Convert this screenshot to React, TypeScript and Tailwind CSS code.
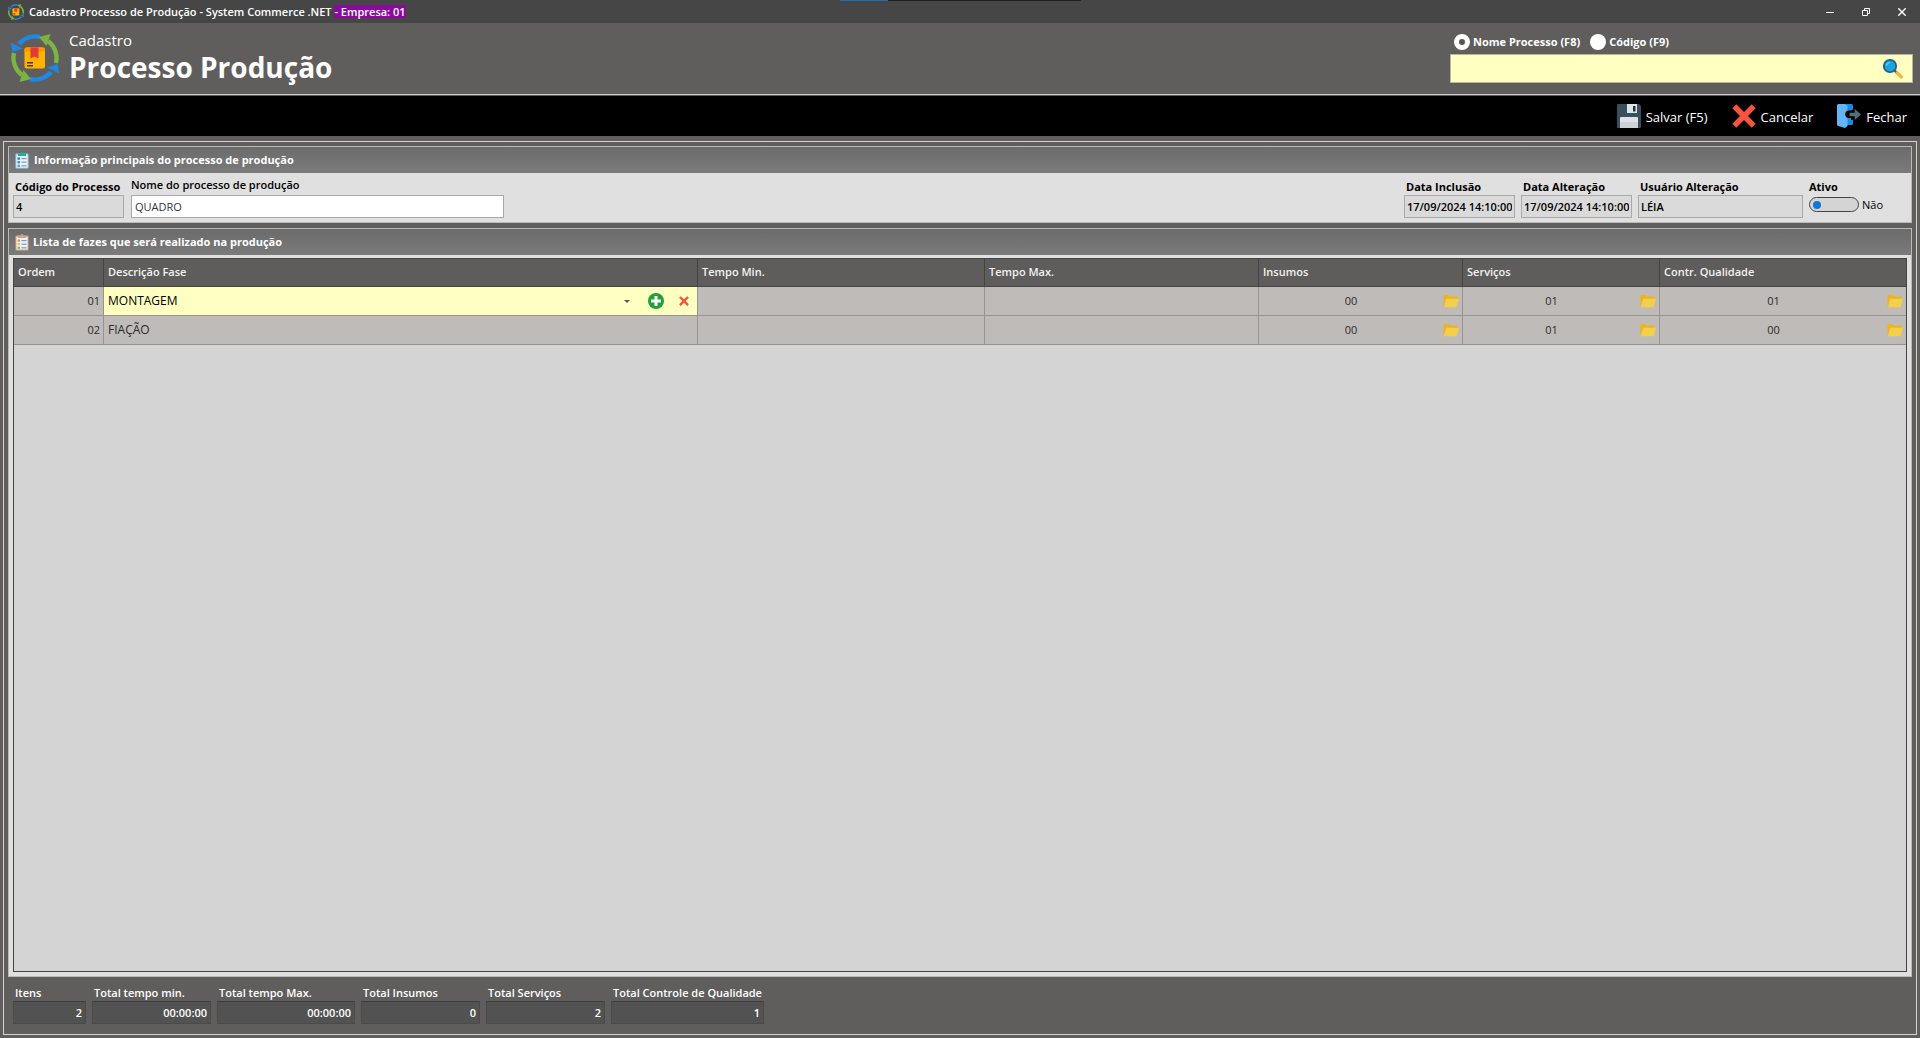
import React, { useState } from "react";

type Fase = {
  ordem: string;
  descricao: string;
  tempoMin: string;
  tempoMax: string;
  insumos: string;
  servicos: string;
  qualidade: string;
};

const FASES: Fase[] = [
  { ordem: "01", descricao: "MONTAGEM", tempoMin: "", tempoMax: "", insumos: "00", servicos: "01", qualidade: "01" },
  { ordem: "02", descricao: "FIAÇÃO", tempoMin: "", tempoMax: "", insumos: "00", servicos: "01", qualidade: "00" },
];

const COLUNAS = [
  { titulo: "Ordem", largura: "w-[90px]" },
  { titulo: "Descrição Fase", largura: "" },
  { titulo: "Tempo Min.", largura: "w-[287px]" },
  { titulo: "Tempo Max.", largura: "w-[274px]" },
  { titulo: "Insumos", largura: "w-[204px]" },
  { titulo: "Serviços", largura: "w-[197px]" },
  { titulo: "Contr. Qualidade", largura: "w-[246px]" },
];

const TOTAIS = [
  { id: "itens", label: "Itens", valor: "2", largura: "w-[73px]" },
  { id: "tempo-min", label: "Total tempo min.", valor: "00:00:00", largura: "w-[119px]" },
  { id: "tempo-max", label: "Total tempo Max.", valor: "00:00:00", largura: "w-[138px]" },
  { id: "insumos", label: "Total Insumos", valor: "0", largura: "w-[119px]" },
  { id: "servicos", label: "Total Serviços", valor: "2", largura: "w-[119px]" },
  { id: "qualidade", label: "Total Controle de Qualidade", valor: "1", largura: "w-[153px]" },
];

// ======== Ícones ========
function LogoProcesso({ className }: { className: string }) {
  return (
    <svg viewBox="0 0 48 48" className={className} aria-hidden="true">
      <g fill="none" strokeWidth="4.4">
        <path d="M8 10A21.500 21.500 0 0 1 29 3" stroke="#1e88e5" />
        <path d="M37 7A21.500 21.500 0 0 1 45 29" stroke="#7cb342" />
        <path d="M40 38A21.500 21.500 0 0 1 19 45" stroke="#1e88e5" />
        <path d="M11 41A21.500 21.500 0 0 1 3 19" stroke="#7cb342" />
      </g>
      <path d="M0 8.500L1.500 18L11.500 14.500z" fill="#1e88e5" />
      <path d="M39.500 0L28 3L35.500 12z" fill="#7cb342" />
      <path d="M48 39.500L46.500 30L36.500 33.500z" fill="#1e88e5" />
      <path d="M8.500 48L20 45L12.500 36z" fill="#7cb342" />
      <rect x="13.500" y="13.500" width="20.500" height="21" rx="2" fill="#ffb300" />
      <path d="M15.500 13.500h16.500a2 2 0 0 1 2 2v2h-20.500v-2a2 2 0 0 1 2-2z" fill="#ff9800" />
      <path d="M19.500 13.500h8v11l-4-2l-4 2z" fill="#e53935" />
      <path d="M16 28h6v1.500h-6zM16 31h6v1.500h-6z" fill="#4e342e" />
    </svg>
  );
}

function IconeLupa() {
  return (
    <svg viewBox="0 0 22 22" className="size-[22px]" aria-hidden="true">
      <path d="M13.500 13.500L19.500 19" stroke="#f0b445" strokeWidth="3.200" strokeLinecap="round" />
      <path d="M12 12l2 2" stroke="#37607a" strokeWidth="2" />
      <circle cx="8" cy="8" r="6.200" fill="#1fa2e0" stroke="#1b668c" strokeWidth="1.800" />
      <path d="M4.500 7.500a3.600 3.600 0 0 1 3-3" stroke="#6fcbf5" strokeWidth="1.300" fill="none" />
    </svg>
  );
}

function IconeSalvar() {
  return (
    <svg viewBox="0 0 24 24" className="size-6" aria-hidden="true">
      <path d="M1 0h21l2 2v21a1 1 0 0 1-1 1H1a1 1 0 0 1-1-1V1a1 1 0 0 1 1-1z" fill="#37505e" />
      <path d="M10 0h10v9H10z" fill="#dfe3e6" />
      <path d="M16 2h2.500v5.500H16z" fill="#263238" />
      <path d="M4 13h16a1 1 0 0 1 1 1v10H3V14a1 1 0 0 1 1-1z" fill="#dfe1e6" />
      <path d="M3 18h18v6H3z" fill="#cdd1d6" />
    </svg>
  );
}

function IconeX({ className }: { className: string }) {
  return (
    <svg viewBox="0 0 24 24" className={className} aria-hidden="true">
      <path d="M4.200 0.300L12 8L19.800 0.300L23.700 4.200L16 12L23.700 19.800L19.800 23.700L12 16L4.200 23.700L0.300 19.800L8 12L0.300 4.200z" fill="#f65340" />
    </svg>
  );
}

function IconeFechar() {
  return (
    <svg viewBox="0 0 24 24" className="size-6" aria-hidden="true">
      <path d="M8 0h6.500A1.500 1.500 0 0 1 16 1.500v18a1.500 1.500 0 0 1-1.500 1.500H8z" fill="#1e88e5" />
      <path d="M0 1.500A1.500 1.500 0 0 1 1.500 0H8l2.500 2v20L8 24L1.300 22A1.500 1.500 0 0 1 0 20.500z" fill="#64b5f6" />
      <path d="M16 5.500v10.500h-2v-2h-2a2 2 0 0 1 0-7.500h2z" fill="#000" />
      <path d="M12.500 8.800h5.200V5l6.300 5.500l-6.300 5.500v-3.800h-5.200z" fill="#546e7a" />
    </svg>
  );
}

function IconeLista({ prancha, clip, marcas }: { prancha: string; clip: string; marcas: string[] }) {
  return (
    <svg viewBox="0 0 14 17" className="h-[17px] w-3.5 shrink-0" aria-hidden="true">
      <rect x="0.500" y="1.500" width="13" height="15" rx="1" fill={prancha} />
      <rect x="1.500" y="3" width="11" height="12.500" fill="#eaf2fb" />
      <path d="M3 1.500h2.500a1.500 1.500 0 0 1 3 0H11V4H3z" fill={clip} />
      {marcas.map((cor, i) => (
        <g key={cor} transform={`translate(0 ${i * 3.6})`}>
          <rect x="2.500" y="5.500" width="2.500" height="2.200" fill={cor} />
          <rect x="6.500" y="6" width="5" height="1.200" fill="#7b9bbd" />
        </g>
      ))}
    </svg>
  );
}

function IconePasta() {
  return (
    <svg viewBox="0 0 16 14" className="h-3.5 w-4" aria-hidden="true">
      <path d="M0.500 1h5l1.500 1.500h7.500v3H3L0.500 13z" fill="#edb41f" />
      <path d="M3.300 4.800H16L13.500 13.300H0.800z" fill="#f3cf4a" />
    </svg>
  );
}

// ======== Campos ========
interface CampoProps {
  id: string;
  label: string;
  valor: string;
  largura: string;
}

function CampoLeitura({ id, label, valor, largura }: CampoProps) {
  return (
    <div className={`flex flex-col ${largura}`}>
      <label htmlFor={id} className="px-0.5 text-[11px] leading-4 font-bold whitespace-nowrap">{label}</label>
      <input id={id} readOnly value={valor} className="h-[23px] w-full border border-[#a9a9a9] bg-[#dadada] px-0.5 text-[11px] font-semibold" />
    </div>
  );
}

function CampoTotal({ id, label, valor, largura }: CampoProps) {
  return (
    <div className={`flex flex-col ${largura}`}>
      <label htmlFor={id} className="px-0.5 text-[11px] leading-4 font-semibold whitespace-nowrap text-white">{label}</label>
      <input id={id} readOnly value={valor} className="h-[23px] w-full border border-[#4b4b4b] border-t-[#3e3e3e] bg-[#525252] px-[3px] text-right text-[11px] font-semibold text-white" />
    </div>
  );
}

function CelulaPasta({ valor, titulo }: { valor: string; titulo: string }) {
  return (
    <td className="border-r border-b border-[#979391] p-0 last:border-r-0">
      <div className="flex items-center pr-[3px]">
        <span className="flex-1 text-center">{valor}</span>
        <button type="button" aria-label={titulo}><IconePasta /></button>
      </div>
    </td>
  );
}

export default function App() {
  const [filtro, setFiltro] = useState<"nome" | "codigo">("nome");
  const [busca, setBusca] = useState("");
  const [nome, setNome] = useState("QUADRO");
  const [ativo, setAtivo] = useState(false);
  const [descricao, setDescricao] = useState("MONTAGEM");

  const radioClass =
    "size-4 appearance-none rounded-full bg-white checked:border-[5px] checked:border-white checked:bg-[#555]";

  return (
    <div className="flex min-h-screen flex-col bg-[#5f5e5c] font-['Open_Sans','Noto_Sans',sans-serif] text-black">
      {/* Barra de título */}
      <div className="relative flex h-[23px] items-center bg-[#464646] pl-2 text-white">
        <div className="absolute top-0 left-[43.75%] flex h-px w-[241px] bg-[#1f1f1f]">
          <div className="w-12 bg-[#1f6fae]" />
        </div>
        <LogoProcesso className="size-4" />
        <h1 className="ml-[5px] flex text-[11px] leading-[13px] font-semibold whitespace-pre">
          Cadastro Processo de Produção - System Commerce .NET <span className="bg-[#8b0a9b]">- Empresa: 01</span>
        </h1>
        <div className="ml-auto flex">
          <button type="button" aria-label="Minimizar" className="flex h-[23px] w-9 items-center justify-center">
            <svg viewBox="0 0 8 8" className="size-2"><path d="M0 4.500h8" stroke="#fff" /></svg>
          </button>
          <button type="button" aria-label="Restaurar" className="flex h-[23px] w-9 items-center justify-center">
            <svg viewBox="0 0 8 8" className="size-2" fill="none" stroke="#fff"><path d="M0.500 2.500h5v5h-5zM2.500 2.500v-2h5v5h-2" /></svg>
          </button>
          <button type="button" aria-label="Fechar janela" className="flex h-[23px] w-9 items-center justify-center">
            <svg viewBox="0 0 8 8" className="size-2"><path d="M0.300 0.300l7.400 7.400M7.700 0.300l-7.400 7.400" stroke="#fff" strokeWidth="1.400" /></svg>
          </button>
        </div>
      </div>

      {/* Cabeçalho */}
      <header className="mb-px flex h-[72px] items-start justify-between border-b border-[#c9c9c9] pt-[11px] pr-[7px] pl-[11px] text-white">
        <div className="flex">
          <LogoProcesso className="size-12" />
          <div className="ml-2.5 flex flex-col">
            <span className="text-[15px] leading-3">Cadastro</span>
            <h2 className="mt-1 text-[28px] leading-[34px] font-bold">Processo Produção</h2>
          </div>
        </div>
        <div className="flex w-[463px] flex-col">
          <div className="flex h-4 items-center gap-2.5 pl-1 text-[11px] font-bold">
            <label className="flex items-center gap-[3px]">
              <input type="radio" name="filtro" checked={filtro === "nome"} onChange={() => setFiltro("nome")} className={radioClass} />
              Nome Processo (F8)
            </label>
            <label className="flex items-center gap-[3px]">
              <input type="radio" name="filtro" checked={filtro === "codigo"} onChange={() => setFiltro("codigo")} className={radioClass} />
              Código (F9)
            </label>
          </div>
          <div className="mt-1 flex h-[29px] items-center border border-[#b5b5a0] bg-[#ffffc1] pr-2">
            <input aria-label="Pesquisar processo" value={busca} onChange={(e) => setBusca(e.target.value)} className="h-full min-w-0 flex-1 px-1 text-sm text-black outline-none" />
            <button type="button" aria-label="Pesquisar"><IconeLupa /></button>
          </div>
        </div>
      </header>

      {/* Ações */}
      <div className="flex h-10 items-center justify-end gap-6 bg-black pr-[13px] text-[13px] text-white">
        <button type="button" className="flex items-center gap-[5px]"><IconeSalvar /><span className="pt-[3px]">Salvar (F5)</span></button>
        <button type="button" className="flex items-center gap-[5px]"><IconeX className="size-6" /><span className="pt-[3px]">Cancelar</span></button>
        <button type="button" className="flex items-center gap-[5px]"><IconeFechar /><span className="pt-[3px]">Fechar</span></button>
      </div>

      <main className="mx-[3px] mt-[5px] mb-[3px] flex flex-1 flex-col border border-[#d2d2d2] p-1">
        <section className="border border-[#bababa] bg-[#e0e0e0]">
          <h3 className="flex h-[26px] items-center gap-[5px] bg-linear-to-b from-[#6b6b6b] to-[#7b7b7b] pl-1.5 text-[11px] font-bold text-white">
            <IconeLista prancha="#a9cdf0" clip="#16b59b" marcas={["#1976d2", "#2f8be0", "#4b9be6"]} />
            Informação principais do processo de produção
          </h3>
          <div className="flex items-end gap-[7px] p-1">
            <CampoLeitura id="codigo" label="Código do Processo" valor="4" largura="w-[111px]" />
            <div className="flex w-[373px] flex-col">
              <label htmlFor="nome" className="mb-0.5 text-[11px] leading-4 font-semibold">Nome do processo de produção</label>
              <input id="nome" value={nome} onChange={(e) => setNome(e.target.value)} className="h-[23px] w-full border border-[#a9a9a9] bg-white px-[3px] text-[11px] text-[#333]" />
            </div>
            <div className="ml-auto flex items-end gap-1.5 pr-6">
              <CampoLeitura id="inclusao" label="Data Inclusão" valor="17/09/2024 14:10:00" largura="w-[111px]" />
              <CampoLeitura id="alteracao" label="Data Alteração" valor="17/09/2024 14:10:00" largura="w-[111px]" />
              <CampoLeitura id="usuario" label="Usuário Alteração" valor="LÉIA" largura="w-[165px]" />
              <div className="flex flex-col">
                <label htmlFor="ativo" className="text-[11px] leading-4 font-bold">Ativo</label>
                <div className="flex h-[23px] items-start gap-[3px] pt-0.5">
                  <input
                    id="ativo"
                    type="checkbox"
                    checked={ativo}
                    onChange={() => setAtivo(!ativo)}
                    className="flex h-[15px] w-[50px] appearance-none items-center rounded-full border border-[#444] bg-[#d4d4d4] px-[3px] before:size-2 before:rounded-full before:bg-[#0f78d4] checked:justify-end"
                  />
                  <span className="text-[11px] leading-4">{ativo ? "Sim" : "Não"}</span>
                </div>
              </div>
            </div>
          </div>
        </section>

        <section className="mt-[5px] flex flex-1 flex-col border border-[#bababa] bg-[#e0e0e0]">
          <h3 className="flex h-[26px] items-center gap-1 bg-linear-to-b from-[#6b6b6b] to-[#7b7b7b] pl-1.5 text-[11px] font-bold text-white">
            <IconeLista prancha="#e0a878" clip="#c9a58c" marcas={["#f0913a", "#f3c53c", "#6fbf73"]} />
            Lista de fazes que será realizado na produção
          </h3>
          <div className="mx-1 mt-[3px] mb-1 flex-1 border border-[#444] bg-[#d4d4d4]">
            <table className="w-full table-fixed border-separate border-spacing-0 text-[11px]">
              <thead>
                <tr className="h-[28px] bg-[#5f5d5b] text-[#f2f2f2]">
                  {COLUNAS.map((c) => (
                    <th key={c.titulo} className={`border-r border-b border-[#444] px-1 py-0 text-left font-semibold last:border-r-0 ${c.largura}`}>
                      {c.titulo}
                    </th>
                  ))}
                </tr>
              </thead>
              <tbody>
                {FASES.map((f, i) => (
                  <tr key={f.ordem} className="h-[29px] bg-[#bfbbb8] text-[#2b2b2b]">
                    <td className="border-r border-b border-[#979391] px-[3px] py-0 text-right">{f.ordem}</td>
                    {i === 0 ? (
                      <td className="border-r border-b border-[#979391] bg-[#ffffc1] p-0 text-xs text-black">
                        <div className="flex items-center pr-2">
                          <select aria-label="Descrição da fase" value={descricao} onChange={(e) => setDescricao(e.target.value)} className="h-6 min-w-0 flex-1 appearance-none px-1">
                            <option>MONTAGEM</option>
                            <option>FIAÇÃO</option>
                          </select>
                          <svg viewBox="0 0 6 3" className="h-[3px] w-1.5" aria-hidden="true"><path d="M0 0h6L3 3z" fill="#555" /></svg>
                          <button type="button" aria-label="Adicionar fase" className="ml-[18px]">
                            <svg viewBox="0 0 16 16" className="size-4">
                              <circle cx="8" cy="8" r="8" fill="#21a038" />
                              <path d="M6.500 3h3v3.500H13v3H9.500V13h-3V9.500H3v-3h3.500z" fill="#fff" />
                            </svg>
                          </button>
                          <button type="button" aria-label="Remover fase" className="ml-[15px]"><IconeX className="size-2.5" /></button>
                        </div>
                      </td>
                    ) : (
                      <td className="border-r border-b border-[#979391] px-1 py-0 text-xs">{f.descricao}</td>
                    )}
                    <td className="border-r border-b border-[#979391] px-1 py-0">{f.tempoMin}</td>
                    <td className="border-r border-b border-[#979391] px-1 py-0">{f.tempoMax}</td>
                    <CelulaPasta valor={f.insumos} titulo={`Insumos da fase ${f.ordem}`} />
                    <CelulaPasta valor={f.servicos} titulo={`Serviços da fase ${f.ordem}`} />
                    <CelulaPasta valor={f.qualidade} titulo={`Controle de qualidade da fase ${f.ordem}`} />
                  </tr>
                ))}
              </tbody>
            </table>
          </div>
        </section>

        {/* Totais */}
        <footer className="flex gap-1.5 px-[5px] pt-2 pb-1.5">
          {TOTAIS.map((t) => (
            <CampoTotal key={t.id} id={`total-${t.id}`} label={t.label} valor={t.valor} largura={t.largura} />
          ))}
        </footer>
      </main>
    </div>
  );
}
